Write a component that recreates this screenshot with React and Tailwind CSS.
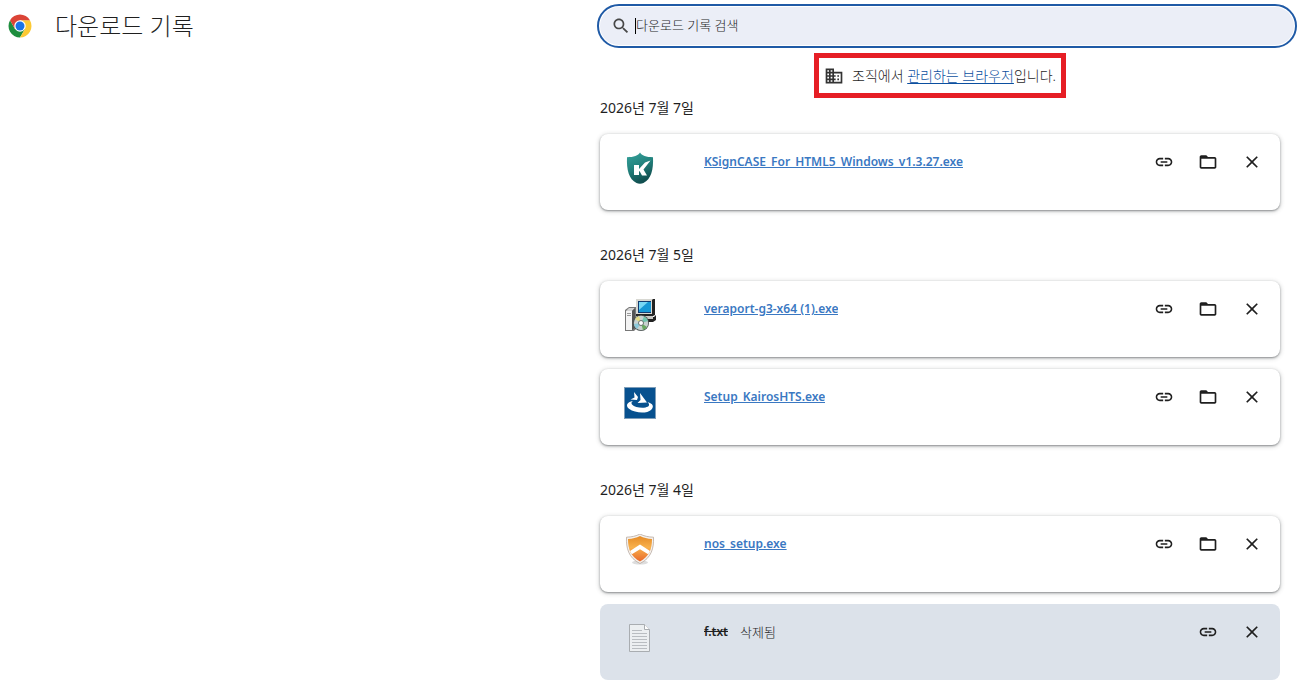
import React from "react";

const LINK =
  "M3.9 12c0-1.71 1.39-3.1 3.1-3.1h4V7H7c-2.76 0-5 2.24-5 5s2.24 5 5 5h4v-1.9H7c-1.71 0-3.1-1.39-3.1-3.1zM8 13h8v-2H8v2zm9-6h-4v1.9h4c1.71 0 3.1 1.39 3.1 3.1s-1.39 3.1-3.1 3.1h-4V17h4c2.76 0 5-2.24 5-5s-2.24-5-5-5z";
const FOLDER =
  "M10 4H4c-1.1 0-1.99.9-1.99 2L2 18c0 1.1.9 2 2 2h16c1.1 0 2-.9 2-2V8c0-1.1-.9-2-2-2h-8l-2-2zM4 8h16v10H4V8z";
const CLOSE =
  "M19 6.41L17.59 5 12 10.59 6.41 5 5 6.41 10.59 12 5 17.59 6.41 19 12 13.41 17.59 19 19 17.59 13.41 12z";
const SEARCH =
  "M15.5 14h-.79l-.28-.27C15.41 12.59 16 11.11 16 9.5 16 5.91 13.09 3 9.5 3S3 5.91 3 9.5 5.91 16 9.5 16c1.61 0 3.09-.59 4.23-1.57l.27.28v.79l5 4.99L20.49 19l-4.99-5zm-6 0C7.01 14 5 11.99 5 9.5S7.01 5 9.5 5 14 7.01 14 9.5 11.99 14 9.5 14z";
const BUSINESS =
  "M12 7V3H2v18h20V7H12zM6 19H4v-2h2v2zm0-4H4v-2h2v2zm0-4H4V9h2v2zm0-4H4V5h2v2zm4 12H8v-2h2v2zm0-4H8v-2h2v2zm0-4H8V9h2v2zm0-4H8V5h2v2zm10 12h-8v-2h2v-2h-2v-2h2v-2h-2V9h8v10zm-2-8h-2v2h2v-2zm0 4h-2v2h2v-2z";

function Glyph({ d, className }) {
  return (
    <svg viewBox="0 0 24 24" fill="currentColor" className={className} aria-hidden="true">
      <path d={d} />
    </svg>
  );
}

function ChromeLogo() {
  return (
    <svg viewBox="0 0 48 48" className="size-6 shrink-0" aria-hidden="true">
      <path d="M14 29.8 L4.1 12.5 A23 23 0 0 0 24 47 L34 29.8 Z" fill="#1e8e3e" />
      <path d="M34 29.8 L24 47 A23 23 0 0 0 43.9 12.5 H24 Z" fill="#fcc934" />
      <path d="M4.1 12.5 A23 23 0 0 1 43.9 12.5 H24 L14 29.8 Z" fill="#db4437" />
      <circle cx="24" cy="24" r="11.5" fill="#fff" />
      <circle cx="24" cy="24" r="9" fill="#1a73e8" />
    </svg>
  );
}

function ShieldK() {
  return (
    <svg viewBox="0 0 32 32" className="size-8" aria-hidden="true">
      <defs>
        <linearGradient id="teal" x1="0" y1="0" x2="0.4" y2="1">
          <stop offset="0" stopColor="#38a39d" />
          <stop offset="0.5" stopColor="#23847f" />
          <stop offset="1" stopColor="#114f50" />
        </linearGradient>
      </defs>
      <path d="M16 .5c1.500 3 6.500 4.700 13 4.700.600 12.500-2 22-9.500 25.700-2 1-5 1-7 0C5 27.200 2.400 17.700 3 5.200 9.500 5.200 14.500 3.500 16 .5z" fill="url(#teal)" />
      <path d="M10 13h5v4l6-6.500 5.500-2-7 9 3.500 6h-5l-2.500-4.500-.500.600V23h-5z" fill="#fff" />
    </svg>
  );
}

function InstallerDisc() {
  return (
    <svg viewBox="0 0 32 32" className="size-8" aria-hidden="true">
      <path d="M1 11l4-3h7v22l-2 2H1z" fill="#777" />
      <path d="M2 12h6v19H2z" fill="#f3f3f3" />
      <path d="M2 12l3-3h6l-3 3z" fill="#d4d4d4" />
      <path d="M8 12l3-3v20l-3 2z" fill="#555" />
      <path d="M3 14h4v1H3zM3 16h4v1H3z" fill="#999" />
      <path d="M14 18h16l2-2v5l-3 2H14z" fill="#222" />
      <path d="M14 17h15v3H14z" fill="#c8c8c4" />
      <path d="M12 0h19v16l-2 1H12z" fill="#222" />
      <path d="M12 0h17l-1 1v14H12z" fill="#d8d8d2" />
      <path d="M14 2h13v12H14z" fill="#123a70" />
      <path d="M15 3h12v10H15z" fill="#1697d5" />
      <path d="M15 3h9l-9 8z" fill="#78d7f4" />
      <circle cx="17" cy="24" r="8" fill="#4c5453" />
      <circle cx="17" cy="24" r="7.200" fill="#c8d1d0" />
      <path d="M17 24l-6-4a7.200 7.200 0 0 1 4-3z" fill="#e4dc85" />
      <path d="M17 24l3-6.500a7.200 7.200 0 0 1 4 4.500z" fill="#72c5ae" />
      <path d="M17 24l6 4a7.200 7.200 0 0 1-4 3z" fill="#67a95e" />
      <path d="M17 24l-4 6a7.200 7.200 0 0 1-3-5z" fill="#8bc9db" />
      <circle cx="17" cy="24" r="2.500" fill="#fff" stroke="#67706e" />
    </svg>
  );
}

function BlueSetup() {
  return (
    <svg viewBox="0 0 32 32" className="size-8" aria-hidden="true">
      <path d="M0 0h32v32H0z" fill="#7d9db9" />
      <path d="M1 1h30v30H1z" fill="#07518f" />
      <path d="M10 5l4 5-1 3-6.500-.500 4-2z" fill="#fff" />
      <path d="M16 6l7 9.500-9.500.500 3-3z" fill="#fff" />
      <path d="M9 14C2.500 15 1.500 19 5 21.800c6 4.500 18 5 22 1.200 3.500-3.300 2-6.500-3.500-8 3 3 1.500 4.800-2 5.400-5 .800-11-.400-13.500-3-1-1.200-.500-2.400 1-3.400z" fill="#fff" />
    </svg>
  );
}

function OrangeShield() {
  return (
    <svg viewBox="0 0 32 32" className="size-8" aria-hidden="true">
      <defs>
        <linearGradient id="amber" x1="0" y1="0" x2="0" y2="1">
          <stop offset="0" stopColor="#e58a25" />
          <stop offset="0.45" stopColor="#f8b14c" />
          <stop offset="1" stopColor="#e9692b" />
        </linearGradient>
      </defs>
      <ellipse cx="16" cy="28.500" rx="8" ry="2" fill="#ddd" />
      <path d="M16 0c4 2.200 8.500 3 13.500 3.200C30 14 27.500 24 16 29.500 4.500 24 2 14 2.500 3.200 7.500 3 12 2.200 16 0z" fill="#f4f1ee" stroke="#b9aaa0" strokeWidth="0.800" />
      <path d="M16 2c3.500 1.700 7.500 2.700 12 3C28 15 25.300 22.500 16 27.500 6.700 22.500 4 15 4 5c4.500-.300 8.500-1.300 12-3z" fill="url(#amber)" />
      <path d="M16 10.500l10 6.500-1.800 3.300L16 15.200l-8.200 5.100L6 17z" fill="#fff" />
    </svg>
  );
}

function TextFile() {
  return (
    <svg viewBox="0 0 32 32" className="size-8" aria-hidden="true">
      <path d="M5.500 2.500h15l5 5v22h-20z" fill="#eceff1" stroke="#a9adb1" />
      <path d="M20.500 2.500v5h5" fill="#fff" stroke="#a9adb1" />
      <path d="M8 8.500h10M8 11.500h15M8 14.500h15M8 17.500h15M8 20.500h15M8 23.500h15M8 26.500h15" stroke="#b9bdc1" />
    </svg>
  );
}

const GROUPS = [
  {
    date: "2026년 7월 7일",
    items: [{ name: "KSignCASE_For_HTML5_Windows_v1.3.27.exe", Icon: ShieldK }],
  },
  {
    date: "2026년 7월 5일",
    items: [
      { name: "veraport-g3-x64 (1).exe", Icon: InstallerDisc },
      { name: "Setup_KairosHTS.exe", Icon: BlueSetup },
    ],
  },
  {
    date: "2026년 7월 4일",
    items: [
      { name: "nos_setup.exe", Icon: OrangeShield },
      { name: "f.txt", Icon: TextFile, deleted: true },
    ],
  },
];

function IconButton({ label, d }) {
  return (
    <button type="button" aria-label={label} className="flex size-8 items-center justify-center rounded-full text-[#1f1f1f]">
      <Glyph d={d} className="size-5" />
    </button>
  );
}

function DownloadCard({ name, Icon, deleted }) {
  return (
    <li
      className={
        deleted
          ? "flex h-[76px] items-start rounded-lg bg-[#dce2ea] pr-3 pl-6"
          : "flex h-[76px] items-start rounded-lg bg-white pr-3 pl-6 shadow-[0_1px_2px_rgba(60,64,67,0.5),0_1px_4px_1px_rgba(60,64,67,0.2)]"
      }
    >
      <div className="mt-[18px] shrink-0">
        <Icon />
      </div>
      <div className="mt-[18px] ml-12 flex min-w-0 flex-1 items-center gap-3 text-xs leading-5">
        {deleted ? (
          <>
            <s className="font-semibold text-[#1f1f1f]">{name}</s>
            <span className="text-[13px] leading-5 font-light text-[#1f1f1f]">삭제됨</span>
          </>
        ) : (
          <a href="#" className="truncate font-semibold text-[#3a78c2] underline">
            {name}
          </a>
        )}
      </div>
      <div className="mt-3 flex gap-3">
        <IconButton label="다운로드 링크 복사" d={LINK} />
        {!deleted && <IconButton label="폴더에 표시" d={FOLDER} />}
        <IconButton label="목록에서 삭제" d={CLOSE} />
      </div>
    </li>
  );
}

export default function App() {
  return (
    <div className="bg-white pb-2 font-['Noto_Sans','Noto_Sans_CJK_KR',sans-serif] text-[#1f1f1f]">
      <header className="flex items-center justify-between pt-1 pr-[7px] pl-2">
        <div className="flex items-center gap-[23px]">
          <ChromeLogo />
          <h1 className="text-2xl font-light whitespace-nowrap">다운로드 기록</h1>
        </div>
        <label className="flex h-11 w-full max-w-[700px] items-center rounded-full border-2 border-[#1f5aa6] bg-[#ebeef7] pr-4 pl-3 ring-1 ring-white ring-inset">
          <Glyph d={SEARCH} className="size-5 shrink-0 text-[#474747]" />
          <span className="ml-1 h-4 w-px shrink-0 bg-black" aria-hidden="true" />
          <input
            type="text"
            aria-label="다운로드 기록 검색"
            placeholder="다운로드 기록 검색"
            className="min-w-0 flex-1 bg-transparent text-[13px] font-light outline-none placeholder:text-[#1f1f1f]"
          />
        </label>
      </header>
      <main className="mr-6 ml-auto w-full max-w-[680px]">
        <div className="flex justify-center pt-[5px]">
          <p className="flex h-[45px] items-center gap-2 border-[5px] border-[#e61e25] px-[5px] text-sm font-light whitespace-nowrap text-[#1f1f1f]">
            <Glyph d={BUSINESS} className="size-5 shrink-0 text-[#333333]" />
            <span>
              조직에서{" "}
              <a href="#" className="text-[#0b4fa0] underline underline-offset-2">
                관리하는 브라우저
              </a>
              입니다.
            </span>
          </p>
        </div>
        <div className="flex flex-col gap-[35px]">
          {GROUPS.map((group) => (
            <section key={group.date}>
              <h2 className="pb-4 text-sm leading-5 font-normal">{group.date}</h2>
              <ul className="flex flex-col gap-3">
                {group.items.map((item) => (
                  <DownloadCard key={item.name} {...item} />
                ))}
              </ul>
            </section>
          ))}
        </div>
      </main>
    </div>
  );
}
